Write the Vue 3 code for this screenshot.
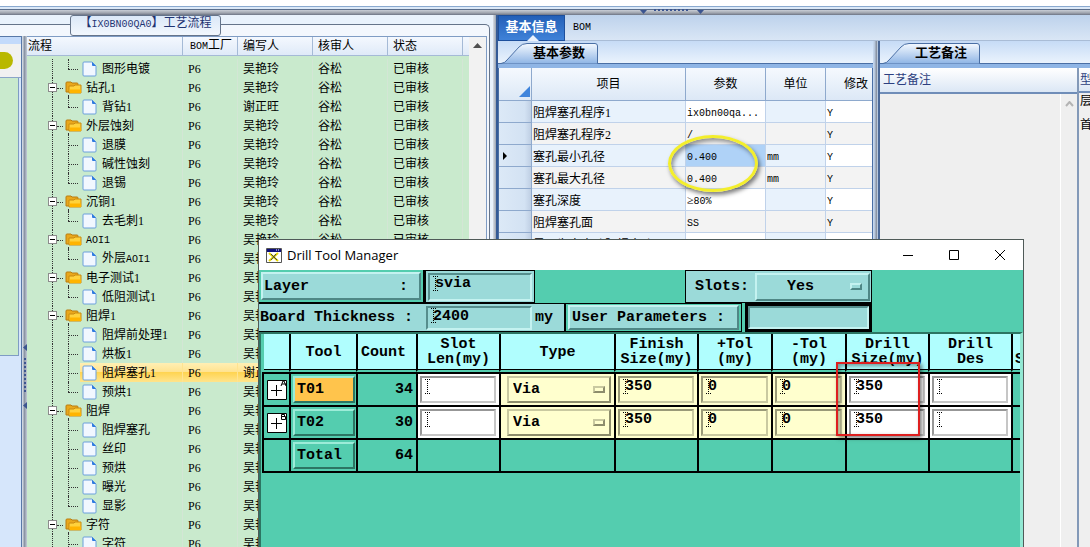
<script setup>
import { ref } from 'vue';

const steps = [
  { name: '图形电镀', last: true },
  { name: '钻孔1', folder: true },
  { name: '背钻1', last: true, writer: '谢正旺' },
  { name: '外层蚀刻', folder: true },
  { name: '退膜' },
  { name: '碱性蚀刻' },
  { name: '退锡', last: true },
  { name: '沉铜1', folder: true },
  { name: '去毛刺1', last: true },
  { name: 'AOI1', folder: true },
  { name: '外层AOI1', last: true },
  { name: '电子测试1', folder: true },
  { name: '低阻测试1', last: true },
  { name: '阻焊1', folder: true },
  { name: '阻焊前处理1' },
  { name: '烘板1' },
  { name: '阻焊塞孔1', writer: '谢正旺', selected: true },
  { name: '预烘1', last: true },
  { name: '阻焊', folder: true },
  { name: '阻焊塞孔' },
  { name: '丝印' },
  { name: '预烘' },
  { name: '曝光' },
  { name: '显影', last: true },
  { name: '字符', folder: true },
  { name: '字符' }
];

const params = [
  { name: '阻焊塞孔程序1', value: 'ix0bn00qa...', unit: '' },
  { name: '阻焊塞孔程序2', value: '/', unit: '' },
  { name: '塞孔最小孔径', value: '0.400', unit: 'mm', current: true },
  { name: '塞孔最大孔径', value: '0.400', unit: 'mm' },
  { name: '塞孔深度', value: '≥80%', unit: '' },
  { name: '阻焊塞孔面', value: 'SS', unit: '' },
  { name: '是否为盘中孔阻焊塞孔', value: '', unit: '' }
];

const layer = ref('svia');
const thickness = ref('2400');
const userParam = ref('');
const slots = ref('Yes');

const tools = ref([
  { mark: 'A', name: 'T01', count: 34, len: '', type: 'Via', finish: '350', plus: '0', minus: '0', drill: '350', des: '', active: true },
  { mark: 'B', name: 'T02', count: 30, len: '', type: 'Via', finish: '350', plus: '0', minus: '0', drill: '350', des: '' }
]);

const fields = [
  { key: 'finish', yellow: true },
  { key: 'plus', yellow: true },
  { key: 'minus', yellow: true },
  { key: 'drill' },
  { key: 'des' }
];

// latin runs are set in a narrow mono font, the rest (and bare digits) in the normal one
const parts = (text) => text.match(/[\x20-\x7e]+|[^\x20-\x7e]+/g) || [];
const isLatin = (text) => /^[\x20-\x7e]/.test(text) && !/^[0-9]+$/.test(text);
</script>

<template>
  <div class="screen">
    <div class="topbar">
      <svg width="64" height="6" viewBox="0 0 64 6">
        <path d="M0 1h7l-3.500 4zM57 1h7l-3.500 4z" fill="#3c5590" />
        <path d="M14 1h36" stroke="#3c5590" stroke-width="2" stroke-dasharray="2 2" />
      </svg>
    </div>
    <div class="main">
      <section class="left">
        <div class="frame">
          <h1 class="legend">【<span class="latin">IX0BN00QA0</span>】工艺流程</h1>
          <div class="body">
            <div class="nav">
              <div class="nav-top"></div>
              <div class="nav-icon"><i></i></div>
              <div class="nav-list"></div>
            </div>
            <div class="splitter">
              <svg width="5" height="66" viewBox="0 0 5 66">
                <path d="M5 0v7L1 3.500zM5 58v7L1 61.500z" fill="#3c5590" />
                <path d="M3 14v36" stroke="#3c5590" stroke-width="2" stroke-dasharray="2 2" />
              </svg>
            </div>
            <div class="tree">
              <table>
                <colgroup>
                  <col class="w-name"><col class="w-bom"><col class="w-writer"><col class="w-user"><col class="w-user"><col>
                </colgroup>
                <thead>
                  <tr>
                    <th>流程</th>
                    <th><span class="latin">BOM</span>工厂</th>
                    <th>编写人</th>
                    <th>核审人</th>
                    <th>状态</th>
                    <th></th>
                  </tr>
                </thead>
                <tbody>
                  <tr v-for="(s, i) in steps" :key="i" :class="{ selected: s.selected }">
                    <td>
                      <div class="node" :class="{ folder: s.folder, last: s.last }">
                        <button v-if="s.folder" class="toggle" aria-label="折叠"></button>
                        <svg v-if="s.folder" width="17" height="15" viewBox="0 0 17 15">
                          <path d="M1 12V3q0-1 1-1h4l1 1h5q1 0 1 1v8z" fill="#e9a81c" stroke="#b97c10" />
                          <path d="M4 13V6h5l1-1h6v8z" fill="#ffd23c" stroke="#c98a10" />
                          <path d="M5 9.500h11V13H5z" fill="#ffb400" />
                        </svg>
                        <svg v-else width="15" height="16" viewBox="0 0 15 16">
                          <path d="M1 2q0-1 1-1h8l4 4v9q0 1-1 1H2q-1 0-1-1z" fill="#f1f7ff" stroke="#6a9fdc" />
                          <path d="M10 1v3q0 1 1 1h3z" fill="#2f7be0" />
                        </svg>
                        <span class="label"><span v-for="(p, k) in parts(s.name)" :key="k" :class="{ latin: isLatin(p) }">{{ p }}</span></span>
                      </div>
                    </td>
                    <td>P6</td>
                    <td>{{ s.writer || '吴艳玲' }}</td>
                    <td>谷松</td>
                    <td>已审核</td>
                    <td></td>
                  </tr>
                </tbody>
              </table>
              <div class="scroll">
                <svg width="9" height="5" viewBox="0 0 9 5"><path d="M0 5l4.500-5L9 5z" fill="#505050" /></svg>
              </div>
            </div>
          </div>
        </div>
      </section>

      <div class="divider"></div>

      <section class="right">
        <nav class="tabs">
          <button class="tab on">基本信息</button>
          <button class="tab latin">BOM</button>
        </nav>
        <div class="panes">
          <section class="pane params">
            <div class="subtabs">
              <button class="subtab">
                <svg width="98" height="21" viewBox="0 0 98 21">
                  <defs>
                    <linearGradient id="tabFill" x1="0" y1="0" x2="0" y2="1">
                      <stop offset="0" stop-color="#f4f9ff" />
                      <stop offset="1" stop-color="#8fb5e5" />
                    </linearGradient>
                  </defs>
                  <path d="M0 20.500Q4 20 6 17L18 4Q21 .5 26 .5H94Q96.500 .5 96.500 3V20.500" fill="url(#tabFill)" stroke="#4a6fa5" />
                </svg>
                <span>基本参数</span>
              </button>
            </div>
            <div class="grid">
              <table>
                <colgroup>
                  <col class="p-sel"><col class="p-name"><col class="p-value"><col class="p-unit"><col class="p-edit">
                </colgroup>
                <thead>
                  <tr>
                    <th class="corner"><svg width="11" height="11" viewBox="0 0 11 11"><path d="M11 0v11H0z" fill="#3f84dc" /></svg></th>
                    <th>项目</th>
                    <th>参数</th>
                    <th>单位</th>
                    <th>修改</th>
                  </tr>
                </thead>
                <tbody>
                  <tr v-for="p in params" :key="p.name">
                    <td class="sel"><svg v-if="p.current" width="5" height="8" viewBox="0 0 5 8"><path d="M0 0l4 4-4 4z" /></svg></td>
                    <td><span v-for="(t, k) in parts(p.name)" :key="k" :class="{ latin: isLatin(t) }">{{ t }}</span></td>
                    <td class="value" :class="{ current: p.current }"><span v-for="(t, k) in parts(p.value)" :key="k" :class="{ latin: isLatin(t) }">{{ t }}</span></td>
                    <td><span class="latin">{{ p.unit }}</span></td>
                    <td class="value"><span class="latin">Y</span></td>
                  </tr>
                </tbody>
              </table>
            </div>
          </section>
          <div class="divider thin"></div>
          <section class="pane remarks">
            <div class="subtabs">
              <button class="subtab">
                <svg width="98" height="21" viewBox="0 0 98 21">
                  <path d="M0 20.500Q4 20 6 17L18 4Q21 .5 26 .5H94Q96.500 .5 96.500 3V20.500" fill="url(#tabFill)" stroke="#4a6fa5" />
                </svg>
                <span>工艺备注</span>
              </button>
            </div>
            <div class="notes">
              <div class="note">
                <h2>工艺备注</h2>
                <div class="note-body">
                  <div class="note-scroll">
                    <svg width="9" height="6" viewBox="0 0 9 6"><path d="M1 5l3.500-4L8 5" fill="none" stroke="#b4b4b4" stroke-width="2" /></svg>
                  </div>
                </div>
              </div>
              <div class="note kind">
                <h2>型</h2>
                <p>层</p>
                <p>首</p>
              </div>
            </div>
          </section>
        </div>
      </section>
    </div>

    <div class="ring"></div>

    <div class="window">
      <header class="titlebar">
        <svg width="16" height="15" viewBox="0 0 16 15">
          <path d="M.5.5h15v14H.5z" fill="#fff" stroke="#555" />
          <path d="M1 1h14v3H1z" fill="#10107a" />
          <path d="M10 2h1M12 2h1" stroke="#fff" />
          <path d="M3 5l9 8M12 5l-9 8" stroke="#e8d800" stroke-width="2" />
          <path d="M5 6l6 6M10 6l-5 6" stroke="#444" />
        </svg>
        <span class="caption">Drill Tool Manager</span>
        <button aria-label="Minimize"><svg width="12" height="12" viewBox="0 0 12 12"><path d="M1 6.500h10" stroke="#000" /></svg></button>
        <button aria-label="Maximize"><svg width="12" height="12" viewBox="0 0 12 12"><path d="M1.500 1.500h9v9h-9z" fill="none" stroke="#000" /></svg></button>
        <button aria-label="Close"><svg width="12" height="12" viewBox="0 0 12 12"><path d="M1 1l10 10M11 1L1 11" stroke="#000" /></svg></button>
      </header>

      <div class="line">
        <div class="cell layer-name"><button class="raised"><span>Layer</span><span>:</span></button></div>
        <div class="cell layer-value"><label class="entry"><i></i><input v-model="layer" aria-label="Layer"></label></div>
        <div class="cell slots">
          <label for="slots">Slots:</label>
          <div class="choice raised">
            <select id="slots" v-model="slots"><option>Yes</option><option>No</option></select>
            <b></b>
          </div>
        </div>
      </div>

      <div class="line second">
        <div class="cell board">
          <label for="board">Board Thickness :</label>
          <div class="entry"><i></i><input id="board" v-model="thickness"></div>
          <span>my</span>
        </div>
        <div class="cell user"><button class="raised">User Parameters :</button></div>
        <div class="user-value"><label class="entry"><input v-model="userParam" aria-label="User Parameters"></label></div>
      </div>

      <div class="sheet">
        <table class="tools">
          <colgroup>
            <col class="t-mark"><col class="t-tool"><col class="t-count"><col class="t-size"><col class="t-type">
            <col class="t-size"><col class="t-tol"><col class="t-tol"><col class="t-size"><col class="t-size"><col class="t-tol">
          </colgroup>
          <thead>
            <tr>
              <th></th>
              <th>Tool</th>
              <th>Count</th>
              <th>Slot<br>Len(my)</th>
              <th>Type</th>
              <th>Finish<br>Size(my)</th>
              <th>+Tol<br>(my)</th>
              <th>-Tol<br>(my)</th>
              <th>Drill<br>Size(my)</th>
              <th>Drill<br>Des</th>
              <th class="cut"><br>S</th>
            </tr>
          </thead>
          <tbody>
            <tr v-for="t in tools" :key="t.name">
              <td>
                <svg class="mark" width="20" height="20" viewBox="0 0 20 20">
                  <path d="M.5.5h19v19H.5z" fill="#fff" stroke="#000" />
                  <path d="M4 10.500h11M9.500 5v11" stroke="#000" />
                  <path v-if="t.mark === 'A'" d="M14 6l2-5h1l2 5M15 4h4" fill="none" stroke="#000" />
                  <path v-else d="M14.500 1.500h3v2h-3zM14.500 3.500h4v3h-4z" fill="none" stroke="#000" />
                </svg>
              </td>
              <td><button class="raised tool" :class="{ active: t.active }">{{ t.name }}</button></td>
              <td class="count">{{ t.count }}</td>
              <td class="white"><label class="entry"><i></i><input v-model="t.len" aria-label="Slot Len"></label></td>
              <td class="yellow">
                <div class="choice raised">
                  <select v-model="t.type" aria-label="Type"><option>Via</option><option>PTH</option></select>
                  <b></b>
                </div>
              </td>
              <td v-for="f in fields" :key="f.key" :class="f.yellow ? 'yellow' : 'white'">
                <label class="entry"><i></i><input v-model="t[f.key]" :aria-label="f.key"></label>
              </td>
              <td></td>
            </tr>
            <tr>
              <td></td>
              <td><button class="raised tool">Total</button></td>
              <td class="count">64</td>
              <td v-for="n in 8" :key="n"></td>
            </tr>
          </tbody>
        </table>
      </div>
      <div class="mark-box"></div>
    </div>
  </div>
</template>

<style>
body {
  background: #fff;
  overflow: hidden;
}
</style>

<style scoped>
* {
  box-sizing: border-box;
}

.screen {
  position: relative;
  display: flex;
  flex-direction: column;
  height: 100vh;
  overflow: hidden;
  font-family: "Liberation Serif", "Noto Sans CJK SC", sans-serif;
  font-size: 12px;
  line-height: 16px;
  color: #000;
}

button,
input,
select {
  font: inherit;
  color: inherit;
  background: none;
  border: 0;
  border-radius: 0;
  padding: 0;
  margin: 0;
  outline: 0;
}

svg {
  display: block;
  flex: none;
}

table {
  border-collapse: separate;
  border-spacing: 0;
  table-layout: fixed;
}

th,
td {
  padding: 0;
  font-weight: normal;
  text-align: left;
  white-space: nowrap;
  overflow: hidden;
}

.latin {
  font-family: "Liberation Mono", monospace;
  font-size: 10px;
}

.topbar {
  flex: none;
  height: 15px;
  padding: 9px 0 0 640px;
  background: linear-gradient(#fff 6px, #8aa9cf 6px, #8aa9cf 7px, #dbe8f7 7px, #dbe8f7 9px, #5c6f8c 9px, #5c6f8c 10px, #c9ced6 10px, #9ea3ad 13px, #6c7484 15px);
}

.main {
  flex: 1;
  display: flex;
  min-height: 0;
}

/* process tree */
.left {
  flex: none;
  display: flex;
  width: 493px;
  padding: 9px 3px 0 0;
  background: #e9f2fc;
}

.frame {
  flex: 1;
  display: flex;
  flex-direction: column;
  min-width: 0;
  padding-right: 2px;
  border: solid #65748a;
  border-width: 1px 1px 0 0;
  border-top-right-radius: 5px;
  background: #f3f7fd;
}

.legend {
  flex: none;
  width: 151px;
  height: 21px;
  margin: -10px 0 0 70px;
  border: 1px solid #65748a;
  border-radius: 3px;
  background: linear-gradient(#dbe8f8, #f2f7fd);
  font-size: 12px;
  font-weight: normal;
  line-height: 14px;
  text-align: center;
  color: #1f3472;
  white-space: nowrap;
}

.body {
  flex: 1;
  display: flex;
  min-height: 0;
}

.nav {
  flex: none;
  width: 22px;
  border: solid #5878a8;
  border-width: 1px 1px 0 0;
  background: #d6e6fb;
}

.nav-top {
  height: 7px;
  background: #c3dafb;
}

.nav-icon {
  height: 34px;
  padding-top: 8px;
  background: #f1f1f1;
  border-bottom: 1px solid #8ba5c9;
}

.nav-icon i {
  display: block;
  width: 13px;
  height: 17px;
  border-radius: 0 10px 10px 0;
  background: #b9b800;
}

.nav-list {
  height: 278px;
  margin-right: 2px;
  background: #c9eacd;
  border: solid #7f9cc4;
  border-width: 0 1px 1px 0;
}

.splitter {
  flex: none;
  display: flex;
  align-items: flex-start;
  width: 5px;
  padding-top: 308px;
  background: linear-gradient(90deg, #dfe6ee, #8b95a5, #c4ccd8);
}

.tree {
  flex: 1;
  display: flex;
  min-width: 0;
  overflow: hidden;
  border: solid #7f9cc4;
  border-width: 1px 1px 0 0;
  background: #c9eacd;
}

.tree table {
  flex: 1;
  width: 0;
  align-self: flex-start;
}

.w-name { width: 156px; }
.w-bom { width: 55px; }
.w-writer { width: 75px; }
.w-user { width: 75px; }

.tree th {
  height: 18px;
  padding-left: 5px;
  border-right: 1px solid #a5bad6;
  border-bottom: 1px solid #a5bad6;
  background: linear-gradient(#f4f8fe, #dfeaf8);
}

.tree th:first-child {
  padding-left: 1px;
}

.tree th:nth-child(2) {
  padding-left: 7px;
}

.tree th:last-child {
  border-right: 0;
}

.tree tbody::before {
  content: "";
  display: block;
  height: 3px;
}

.tree td {
  height: 19px;
  padding-left: 5px;
  border-right: 1px solid #d3e6d5;
}

.tree td:first-child {
  padding: 0;
}

.tree td:last-child {
  border-right: 0;
}

.selected td {
  background: linear-gradient(#ffefb4, #ffe391 45%, #ffd452 50%, #ffe48c);
  border-color: #ffe391;
}

.selected td:first-child {
  background: linear-gradient(#ffefb4, #ffe391 45%, #ffd452 50%, #ffe48c) 53px 0 no-repeat;
}

.node {
  position: relative;
  display: flex;
  align-items: center;
  height: 19px;
  padding-left: 55px;
  background: repeating-linear-gradient(#333 0 1px, transparent 1px 2px) 25px 0 / 1px 100% no-repeat;
}

.node::before {
  content: "";
  position: absolute;
  left: 41px;
  top: 0;
  height: 19px;
  border-left: 1px dotted #333;
}

.node::after {
  content: "";
  position: absolute;
  left: 41px;
  top: 10px;
  width: 10px;
  border-top: 1px dotted #333;
}

.node.last::before {
  height: 10px;
}

.node.folder {
  padding-left: 21px;
}

.node.folder::before {
  top: 17px;
  height: 2px;
}

.node.folder::after {
  left: 30px;
  width: 6px;
}

.folder svg {
  margin-left: 8px;
}

.toggle {
  width: 9px;
  height: 9px;
  border: 1px solid #8c8c8c;
  background: linear-gradient(#000, #000) center / 5px 1px no-repeat, #fff;
}

.label {
  margin-left: 5px;
}

.folder .label {
  margin-left: 4px;
}

.scroll {
  flex: none;
  display: flex;
  justify-content: center;
  width: 17px;
  padding-top: 6px;
  background: #f2f2f2;
}

.divider {
  flex: none;
  width: 5px;
  background: linear-gradient(90deg, #d9dee6, #9aa3b0 60%, #345a96 60%);
}

.divider.thin {
  width: 7px;
  background: linear-gradient(90deg, #c3d5ec 15%, #8a94a4 50%, #b9cbe2 65%, #4a6898 70%);
}

/* right side */
.right {
  flex: 1;
  display: flex;
  flex-direction: column;
  min-width: 0;
}

.tabs {
  flex: none;
  display: flex;
  height: 26px;
  border-bottom: 1px solid #a9bcd6;
  background: linear-gradient(#bdd2ec, #d9e6f5);
}

.tab {
  padding: 0 8px;
}

.tab.on {
  position: relative;
  height: 26px;
  width: 67px;
  padding: 0 0 2px;
  font-size: 13px;
  font-weight: bold;
  color: #fff;
  background: linear-gradient(#2460b8, #3f82d8);
  border: 1px solid #1d4f9c;
}

.tab.on::after {
  content: "";
  position: absolute;
  left: 28px;
  bottom: -1px;
  border: 6px solid transparent;
  border-top: 0;
  border-bottom-color: #eaf2fc;
}

.panes {
  flex: 1;
  display: flex;
  min-height: 0;
}

.pane {
  display: flex;
  flex-direction: column;
  min-width: 0;
}

.params {
  flex: none;
  width: 375px;
}

.remarks {
  flex: 1;
}

.subtabs {
  flex: none;
  display: flex;
  align-items: flex-end;
  height: 27px;
  padding: 0 3px 5px;
  background: linear-gradient(#c6dbf6, #eaf3fd 22px, #4a6fa5 22px, #4a6fa5 23px, #8fb5e5 23px);
}

.subtab {
  position: relative;
  width: 98px;
  height: 20px;
  font-size: 13px;
  font-weight: bold;
  text-align: left;
}

.subtab svg {
  position: absolute;
  left: 0;
  top: 0;
}

.subtab span {
  position: relative;
  padding-left: 32px;
}

.grid {
  flex: 1;
  overflow: hidden;
  border: solid #4a6fa5;
  border-width: 0 1px;
  background: #fff;
}

.grid table {
  width: 388px;
}

.p-sel { width: 33px; }
.p-name { width: 154px; }
.p-value { width: 80px; }
.p-unit { width: 60px; }
.p-edit { width: 61px; }

.grid th {
  height: 33px;
  text-align: center;
  border-right: 1px solid #8ea9cd;
  border-bottom: 1px solid #8ea9cd;
  background: linear-gradient(#f5f9fe, #dce8f6);
}

.grid .corner {
  vertical-align: bottom;
  padding: 0 0 3px 20px;
}

.grid td {
  height: 22px;
  padding: 2px 0 0 1px;
  border-right: 1px solid #c0d2ea;
  border-bottom: 1px solid #c0d2ea;
  background: #e8f2fc;
}

.grid td.value {
  background: #fff;
}

.grid tr:nth-child(even) td {
  background: #f3f3f3;
}

.grid td.current {
  background: #afd2f7;
}

.grid tbody td.sel {
  padding: 0 0 0 4px;
  border-color: #8ea9cd;
  background: linear-gradient(90deg, #dce9f7, #d3e2f3 80%, #bfcfe4);
}

.notes {
  flex: 1;
  display: flex;
  min-height: 0;
  background: #efefef;
}

.note {
  flex: 1;
  display: flex;
  flex-direction: column;
}

.note h2 {
  margin: 0;
  height: 26px;
  padding: 4px 3px 0;
  font-size: 12px;
  font-weight: normal;
  color: #2c3f80;
  border-bottom: 2px solid #6f8db8;
  background: linear-gradient(#fff, #dbe7f5);
}

.note-body {
  flex: 1;
  display: flex;
  justify-content: flex-end;
}

.note-scroll {
  width: 17px;
  padding: 7px 0 0 4px;
  border-left: 1px solid #fff;
}

.note.kind {
  flex: none;
  width: 13px;
  border-left: 2px solid #8399b8;
  overflow: hidden;
}

.note.kind h2 {
  height: 25px;
  padding: 4px 0 0 1px;
}

.note.kind p {
  margin: 0 0 8px 1px;
}

.ring {
  position: absolute;
  left: 668px;
  top: 135px;
  width: 90px;
  height: 57px;
  border: 3px solid #f3ee2c;
  border-radius: 50%;
  box-shadow: 2px 3px 4px rgba(0, 0, 0, 0.5), inset 2px 3px 4px rgba(0, 0, 0, 0.4);
}

/* drill tool manager */
.window {
  position: absolute;
  left: 258px;
  top: 239px;
  bottom: 0;
  width: 766px;
  display: flex;
  flex-direction: column;
  border: 1px solid #4f5a58;
  border-bottom: 0;
  background: #54cdaf;
  font: bold 15px/15px "Liberation Mono", monospace;
}

.titlebar {
  flex: none;
  display: flex;
  align-items: center;
  height: 30px;
  padding-left: 7px;
  background: #fff;
  font: 13px/18px "Open Sans", sans-serif;
}

.caption {
  flex: 1;
  margin-left: 5px;
}

.titlebar button {
  display: flex;
  align-items: center;
  justify-content: center;
  width: 46px;
  height: 29px;
}

.line {
  flex: none;
  display: flex;
  height: 33px;
}

.cell {
  display: flex;
  align-items: center;
  border: 1px solid #000;
}

.raised {
  border: 2px solid;
  border-color: #c4f2f0 #4f8786 #4f8786 #c4f2f0;
  background: #9bdad9;
}

.layer-name {
  width: 166px;
  padding: 2px;
  border-width: 0 2px 1px 0;
}

.layer-name .raised {
  display: flex;
  justify-content: space-between;
  align-items: center;
  width: 100%;
  height: 28px;
  padding: 0 11px 0 1px;
}

.layer-value {
  width: 110px;
  padding: 2px;
  background: #9bdad9;
}

.entry {
  position: relative;
  display: block;
  flex: 1;
  height: 28px;
  padding: 0 0 0 5px;
  border: 2px solid;
  border-color: #568e8d #c4f2f0 #c4f2f0 #568e8d;
}

.entry input {
  display: block;
  width: 100%;
  height: 17px;
}

.entry i {
  position: absolute;
  left: 3px;
  top: 1px;
  width: 5px;
  height: 15px;
  background:
    repeating-linear-gradient(#000 0 1px, transparent 1px 2px) 2px 0 / 1px 15px no-repeat,
    repeating-linear-gradient(90deg, #000 0 1px, transparent 1px 2px) 0 0 / 5px 1px no-repeat,
    repeating-linear-gradient(90deg, #000 0 1px, transparent 1px 2px) 0 14px / 5px 1px no-repeat;
}

.slots {
  width: 187px;
  margin-left: 150px;
  padding: 2px 1px 2px 9px;
  justify-content: space-between;
  background: #9bdad9;
}

.choice {
  position: relative;
  display: flex;
  align-items: center;
}

.choice select {
  appearance: none;
  width: 100%;
  height: 20px;
}

.choice b {
  position: absolute;
  right: 6px;
  width: 12px;
  height: 7px;
  border: 2px solid;
  border-color: #c4f2f0 #4f8786 #4f8786 #c4f2f0;
  pointer-events: none;
}

.slots .choice {
  width: 115px;
  height: 28px;
}

.slots select {
  padding-left: 30px;
}

.second {
  height: 29px;
}

.board {
  width: 307px;
  padding: 1px 11px 1px 1px;
  border-width: 1px 2px 1px 0;
  background: #9bdad9;
}

.board label {
  width: 166px;
}

.board .entry {
  height: 24px;
  margin-right: 3px;
}

.second .entry i {
  top: 0;
}

.user {
  width: 176px;
  padding: 1px 2px;
  border-left: 0;
}

.user .raised {
  width: 100%;
  height: 25px;
  padding-left: 2px;
  text-align: left;
}

.user-value {
  display: flex;
  width: 127px;
  margin-left: 3px;
  border: 3px solid #000;
  background: #9bdad9;
}

.user-value .entry {
  height: 23px;
}

.sheet {
  flex: 1;
  min-height: 0;
  overflow: hidden;
  padding-left: 1px;
  border: solid;
  border-width: 2px 3px 0 2px;
  border-color: #2c7563 #92e8d3 #2c7563 #2c7563;
}

.tools {
  width: 823px;
}

.t-mark { width: 27px; }
.t-tool { width: 67px; }
.t-count { width: 60px; }
.t-size { width: 83px; }
.t-type { width: 115px; }
.t-tol { width: 74px; }

.tools th {
  height: 38px;
  border-left: 2px solid #000;
  border-bottom: 2px solid #54cdaf;
  box-shadow: inset 0 -1px 0 #000;
  background: #b0fefe;
  font-weight: bold;
  text-align: center;
}

.tools th:first-child {
  border-left-color: #54cdaf;
}

.tools th:nth-child(3) {
  padding-right: 7px;
}

.tools th.cut {
  text-align: left;
  padding-left: 2px;
}

.tools td {
  height: 33px;
  padding: 0 3px 0 2px;
  border: solid #000;
  border-width: 2px 0 0 2px;
  font-weight: bold;
}

.tools tr:last-child td {
  height: 35px;
  border-bottom-width: 2px;
}

.tools td.white {
  background: #fff;
}

.tools td.yellow {
  background: #ffffce;
}

.tools td .entry {
  height: 27px;
  border-color: #979797 #c6c6c6 #c6c6c6 #979797;
}

.tools td.yellow .entry {
  border-color: #9a9a78 #c9c9a0 #c9c9a0 #9a9a78;
}

.tools td.count {
  text-align: right;
}

.tools .mark {
  margin-left: 1px;
}

.tool {
  display: block;
  width: 62px;
  height: 27px;
  padding-left: 2px;
  text-align: left;
  background: #54cdaf;
  border-color: #9cecd8 #2c7563 #2c7563 #9cecd8;
}

.tool.active {
  background: #ffc44c;
}

.tools .choice {
  height: 27px;
  margin-left: 4px;
  background: #ffffce;
  border-color: #c9c9a0 #8d8d6c #8d8d6c #c9c9a0;
}

.tools .choice select {
  padding-left: 4px;
}

.tools .choice b {
  right: 4px;
  border-color: #c9c9a0 #8d8d6c #8d8d6c #c9c9a0;
}

.mark-box {
  position: absolute;
  left: 577px;
  top: 122px;
  width: 84px;
  height: 74px;
  border: 2px solid #de1f1f;
  box-shadow: 2px 2px 4px rgba(0, 0, 0, 0.5), inset 2px 2px 4px rgba(0, 0, 0, 0.4);
  pointer-events: none;
}
</style>
